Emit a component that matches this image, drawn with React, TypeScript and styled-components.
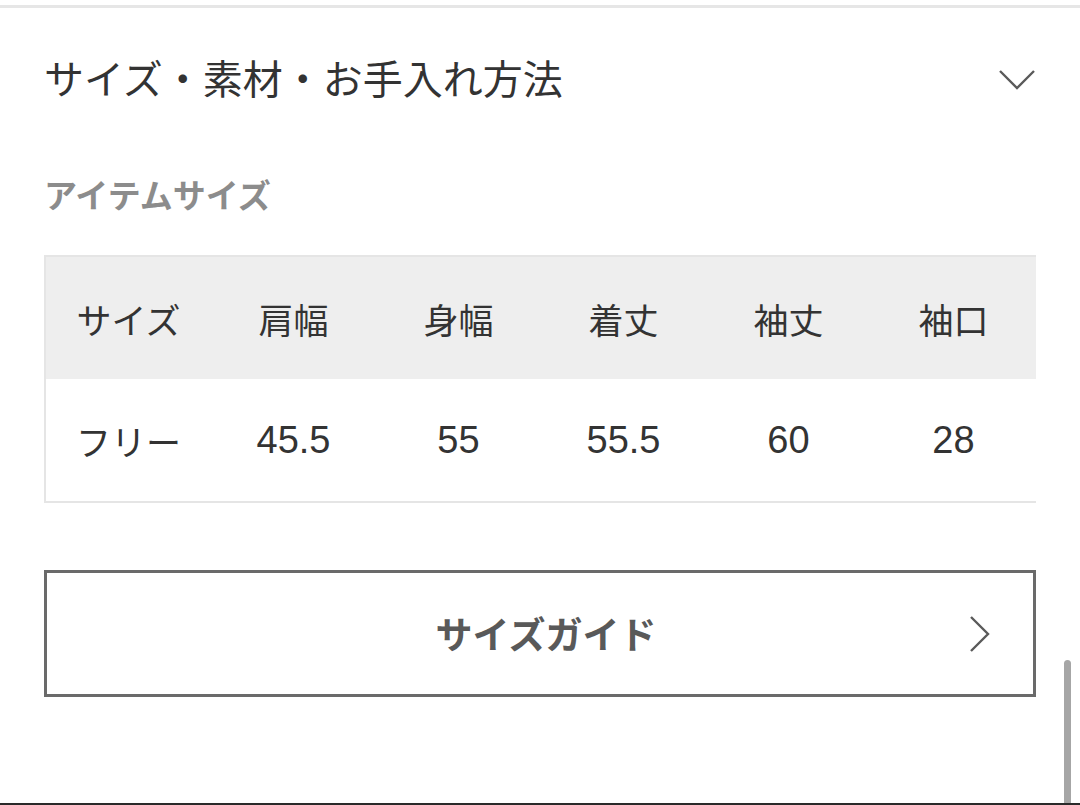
import React from 'react';
import styled, { createGlobalStyle } from 'styled-components';

const GlobalStyle = createGlobalStyle`
  html, body {
    margin: 0;
    padding: 0;
    background: #ffffff;
  }
  body {
    font-family: "Noto Sans CJK JP", "Liberation Sans", sans-serif;
    color: #333333;
  }
`;

const Page = styled.div`
  position: relative;
  width: 1080px;
  height: 805px;
  overflow: hidden;
  background: #ffffff;
`;

const TopRule = styled.div`
  margin-top: 5px;
  height: 3px;
  background: #e6e6e6;
`;

const Content = styled.div`
  padding: 0 44px;
  display: flex;
  flex-direction: column;
`;

const AccordionHeader = styled.div`
  height: 146px;
  display: flex;
  align-items: center;
  justify-content: space-between;
`;

const AccordionTitle = styled.h2`
  margin: 0 0 8px;
  font-size: 40px;
  line-height: 1;
  font-weight: 400;
  color: #333333;
`;

const HeaderIcon = styled.span`
  display: flex;
  margin-bottom: 2px;
`;

const SectionLabel = styled.div`
  margin-top: 24px;
  font-size: 33px;
  line-height: 1;
  font-weight: 700;
  color: #8c8c8c;
`;

const Table = styled.div`
  margin-top: 44px;
  border: 2px solid #e5e5e5;
  border-right: none;
  display: grid;
  grid-template-columns: repeat(6, 1fr);
`;

const Cell = styled.div<{ $head?: boolean; $num?: boolean }>`
  height: 122px;
  display: flex;
  align-items: center;
  justify-content: center;
  background: ${p => (p.$head ? '#eeeeee' : '#ffffff')};
  font-family: ${p => (p.$num ? '"Liberation Sans", sans-serif' : '"Noto Sans CJK JP", sans-serif')};
  font-size: ${p => (p.$num ? 38 : 35)}px;
  line-height: 1;
  color: #333333;
`;

const GuideButton = styled.button`
  margin-top: 67px;
  height: 127px;
  width: 100%;
  border: 3px solid #6a6a6a;
  background: #ffffff;
  display: grid;
  grid-template-columns: 1fr auto 1fr;
  align-items: center;
  padding: 0 42px;
  font-family: "Noto Sans CJK JP", sans-serif;
  cursor: pointer;
`;

const GuideLabel = styled.span`
  grid-column: 2;
  font-size: 37px;
  line-height: 1;
  font-weight: 700;
  color: #595959;
  padding-left: 12px;
`;

const GuideIcon = styled.span`
  grid-column: 3;
  justify-self: end;
  display: flex;
`;

const ScrollThumb = styled.div`
  position: absolute;
  left: 1064px;
  top: 660px;
  width: 7px;
  height: 150px;
  border-radius: 4px;
  background: #a6a6a6;
`;

const BottomEdge = styled.div`
  position: absolute;
  left: 0;
  right: 0;
  bottom: 0;
  height: 2px;
  background: #2a2a2a;
`;

const headers = ['サイズ', '肩幅', '身幅', '着丈', '袖丈', '袖口'];
const values = ['フリー', '45.5', '55', '55.5', '60', '28'];

function ChevronDown() {
  return (
    <svg width="38" height="22" viewBox="0 0 38 22" fill="none">
      <path d="M2 2 L19 19 L36 2" stroke="#5a5a5a" strokeWidth="2.4" />
    </svg>
  );
}

function ChevronRight() {
  return (
    <svg width="22" height="38" viewBox="0 0 22 38" fill="none">
      <path d="M2 2 L19 19 L2 36" stroke="#5a5a5a" strokeWidth="2.4" />
    </svg>
  );
}

export default function App() {
  return (
    <Page>
      <GlobalStyle />
      <TopRule />
      <Content>
        <AccordionHeader>
          <AccordionTitle>サイズ・素材・お手入れ方法</AccordionTitle>
          <HeaderIcon>
            <ChevronDown />
          </HeaderIcon>
        </AccordionHeader>

        <SectionLabel>アイテムサイズ</SectionLabel>

        <Table>
          {headers.map(h => (
            <Cell key={h} $head>{h}</Cell>
          ))}
          {values.map((v, i) => (
            <Cell key={i} $num={i > 0}>{v}</Cell>
          ))}
        </Table>

        <GuideButton>
          <GuideLabel>サイズガイド</GuideLabel>
          <GuideIcon>
            <ChevronRight />
          </GuideIcon>
        </GuideButton>
      </Content>
      <ScrollThumb />
      <BottomEdge />
    </Page>
  );
}
